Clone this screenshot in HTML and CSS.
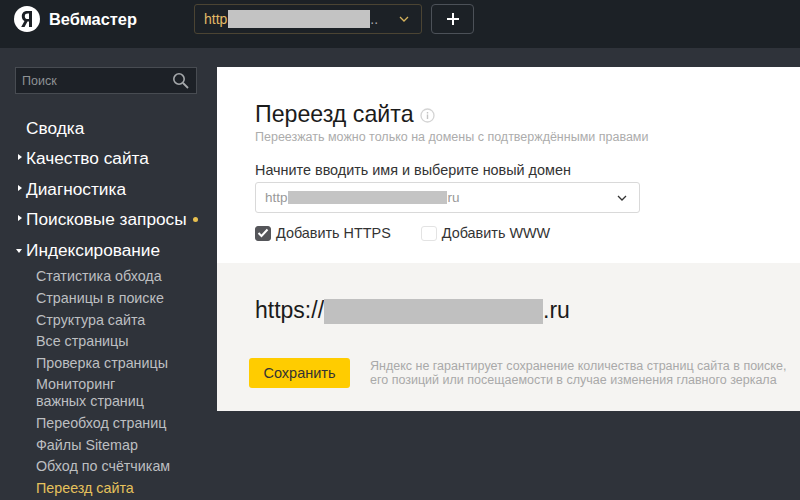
FILE: index.html
```html
<!DOCTYPE html>
<html lang="ru">
<head>
    <meta charset="UTF-8">
    <meta name="viewport" content="width=device-width, initial-scale=1.0">
    <title>Переезд сайта</title>
    <link rel="stylesheet" href="styles.css">
</head>
<body>
    <div class="header">
        <div class="logo">
            <svg class="logo-icon" width="26" height="26" viewBox="0 0 26 26">
                <circle cx="13" cy="13" r="13" fill="#fff"/>
                <path d="M15 21h3V5h-4.400C9.900 5 7.800 6.900 7.800 10.300c0 2.300 1 3.900 2.700 4.800L7.200 21h3.300l3-5.400H15zM15 13.100h-1.200c-1.800 0-3-.9-3-2.900 0-2 1.200-2.700 3-2.700H15z" fill="#1c2025" fill-rule="evenodd"/>
            </svg>
            <span class="logo-text">Вебмастер</span>
        </div>
        <div class="site-select">
            <span class="site-name">http</span>
            <span class="site-mask"></span>
            <span class="site-dots">..</span>
            <svg class="site-arrow" width="10" height="6" viewBox="0 0 10 6"><path d="M1 1l4 4 4-4" fill="none" stroke="#d6b35c" stroke-width="1.3"/></svg>
        </div>
        <div class="add-btn">
            <svg width="14" height="14" viewBox="0 0 14 14"><path d="M7 1v12M1 7h12" stroke="#fff" stroke-width="2"/></svg>
        </div>
    </div>

    <div class="page">
        <div class="sidebar">
            <div class="search">
                <span>Поиск</span>
                <svg width="17" height="17" viewBox="0 0 17 17"><circle cx="7" cy="7" r="5.2" fill="none" stroke="#a5a8ab" stroke-width="1.6"/><path d="M11 11l5 5" stroke="#a5a8ab" stroke-width="1.8"/></svg>
            </div>
            <div class="menu">
                <a class="menu-item">Сводка</a>
                <a class="menu-item closed">Качество сайта</a>
                <a class="menu-item closed">Диагностика</a>
                <a class="menu-item closed">Поисковые запросы<i class="dot"></i></a>
                <a class="menu-item opened">Индексирование</a>
                <div class="submenu">
                    <a>Статистика обхода</a>
                    <a>Страницы в поиске</a>
                    <a>Структура сайта</a>
                    <a>Все страницы</a>
                    <a>Проверка страницы</a>
                    <a class="two-lines">Мониторинг<br>важных страниц</a>
                    <a>Переобход страниц</a>
                    <a>Файлы Sitemap</a>
                    <a>Обход по счётчикам</a>
                    <a class="active">Переезд сайта</a>
                </div>
            </div>
        </div>

        <div class="content">
            <div class="form-part">
                <h1>Переезд сайта
                    <svg class="info" width="15" height="15" viewBox="0 0 15 15"><circle cx="7.5" cy="7.5" r="6.5" fill="none" stroke="#d4d4d4" stroke-width="1.3"/><path d="M7.5 6.5v4.5M7.500 4v1.500" stroke="#c4c4c4" stroke-width="1.4"/></svg>
                </h1>
                <p class="hint">Переезжать можно только на домены с подтверждёнными правами</p>
                <label class="field-label">Начните вводить имя и выберите новый домен</label>
                <div class="domain-select">
                    <span>http</span><span class="domain-mask"></span><span>ru</span>
                    <svg class="domain-arrow" width="10" height="6" viewBox="0 0 10 6"><path d="M1 1l4 4 4-4" fill="none" stroke="#333" stroke-width="1.3"/></svg>
                </div>
                <div class="checks">
                    <div class="check">
                        <span class="box checked">
                            <svg width="12" height="10" viewBox="0 0 12 10"><path d="M1.5 5l3 3 6-6.5" fill="none" stroke="#fff" stroke-width="2"/></svg>
                        </span>
                        Добавить HTTPS
                    </div>
                    <div class="check">
                        <span class="box"></span>
                        Добавить WWW
                    </div>
                </div>
            </div>
            <div class="result-part">
                <div class="result-url">https://<span class="url-mask"></span>.ru</div>
                <div class="save-row">
                    <button class="save-btn">Сохранить</button>
                    <p class="warning">Яндекс не гарантирует сохранение количества страниц сайта в поиске,<br>его позиций или посещаемости в случае изменения главного зеркала</p>
                </div>
            </div>
        </div>
    </div>
</body>
</html>
```

FILE: styles.css
```css
html, body {
    height: 100%;
}
body {
    margin: 0;
    background: #2f333a;
    font-family: "Liberation Sans", Arial, sans-serif;
    overflow: hidden;
}
.header {
    height: 48px;
    background: #1c2126;
    display: flex;
    align-items: flex-start;
    padding: 4px 0 0 14px;
    box-sizing: border-box;
}
.logo {
    display: flex;
    align-items: center;
    width: 180px;
    margin-top: 2px;
}
.logo-text {
    color: #fff;
    font-size: 16.4px;
    font-weight: bold;
    margin-left: 9px;
}
.site-select {
    width: 228px;
    height: 30px;
    border: 1px solid #4b4433;
    border-radius: 3px;
    display: flex;
    align-items: center;
    padding-left: 9px;
    box-sizing: border-box;
}
.site-name {
    color: #e2bb66;
    font-size: 14px;
}
.site-mask {
    width: 142px;
    height: 18px;
    background: #c3c3c3;
    margin-left: 1px;
}
.site-dots {
    color: #aaa;
    font-size: 14px;
}
.site-arrow {
    margin-left: 21px;
}
.add-btn {
    width: 43px;
    height: 30px;
    margin-left: 9px;
    border: 1px solid #4c5158;
    border-radius: 4px;
    display: flex;
    align-items: center;
    justify-content: center;
    box-sizing: border-box;
}
.page {
    display: flex;
    align-items: flex-start;
    padding: 19px 0 0 15px;
}
.sidebar {
    width: 182px;
    margin-right: 20px;
    flex-shrink: 0;
}
.search {
    height: 27px;
    background: #1d2127;
    border: 1px solid #484c52;
    box-sizing: border-box;
    display: flex;
    align-items: center;
    justify-content: space-between;
    padding: 0 7px 0 6px;
    color: #8e9195;
    font-size: 12.5px;
}
.menu {
    margin-top: 19.1px;
}
.menu-item {
    display: block;
    position: relative;
    height: 30.4px;
    line-height: 30px;
    padding-left: 11px;
    color: #fff;
    font-size: 17.25px;
    white-space: nowrap;
}
.closed::before {
    content: "";
    position: absolute;
    left: 3px;
    top: 11px;
    border-left: 4px solid #fff;
    border-top: 3.5px solid transparent;
    border-bottom: 3.5px solid transparent;
}
.opened::before {
    content: "";
    position: absolute;
    left: 1px;
    top: 14px;
    border-top: 4px solid #fff;
    border-left: 3.5px solid transparent;
    border-right: 3.5px solid transparent;
}
.dot {
    position: absolute;
    left: 178px;
    top: 13px;
    width: 5px;
    height: 5px;
    border-radius: 50%;
    background: #e8c04f;
}
.submenu {
    padding-left: 21px;
    padding-top: 1.3px;
}
.submenu a {
    display: block;
    color: #bdbfc1;
    font-size: 14.3px;
    line-height: 21.7px;
    white-space: nowrap;
}
.submenu .two-lines {
    line-height: 17.5px;
    padding: 1px 0 2px;
}
.submenu .active {
    color: #e6c25c;
}
.content {
    flex: 1;
}
.form-part {
    height: 196px;
    background: #fff;
    padding: 35px 0 0 38px;
    box-sizing: border-box;
}
h1 {
    margin: 0;
    color: #1b1b1b;
    font-size: 23.2px;
    font-weight: normal;
    line-height: 24px;
}
.info {
    vertical-align: -1px;
}
.hint {
    margin: 4px 0 0;
    color: #acacac;
    font-size: 12.5px;
    line-height: 15px;
}
.field-label {
    display: block;
    margin-top: 17px;
    color: #333;
    font-size: 14.4px;
    line-height: 16px;
}
.domain-select {
    width: 385px;
    height: 31px;
    margin-top: 4px;
    border: 1px solid #d9d9d9;
    border-radius: 3px;
    box-sizing: border-box;
    display: flex;
    align-items: center;
    padding-left: 9px;
    color: #999;
    font-size: 13.5px;
}
.domain-mask {
    width: 159px;
    height: 13px;
    background: #c4c4c4;
    margin-right: 1px;
}
.domain-arrow {
    margin-left: auto;
    margin-right: 12px;
}
.checks {
    display: flex;
    margin-top: 12px;
    gap: 30px;
}
.check {
    display: flex;
    align-items: center;
    color: #333;
    font-size: 14.4px;
    line-height: 16px;
}
.box {
    width: 16px;
    height: 15px;
    margin-right: 5px;
    border: 1px solid #e3e3e3;
    border-radius: 3px;
    box-sizing: border-box;
    display: flex;
    align-items: center;
    justify-content: center;
}
.box.checked {
    background: #55565a;
    border-color: #55565a;
}
.result-part {
    height: 148px;
    background: #f5f4f2;
    padding: 35px 0 0 32px;
    box-sizing: border-box;
}
.result-url {
    display: flex;
    align-items: center;
    height: 24px;
    padding-left: 6px;
    color: #1b1b1b;
    font-size: 23px;
}
.url-mask {
    width: 219px;
    height: 25px;
    margin-top: 2px;
    background: #c0c0c0;
}
.save-row {
    display: flex;
    align-items: center;
    margin-top: 36px;
}
.save-btn {
    width: 101px;
    height: 30px;
    background: #fc0;
    border: none;
    border-radius: 3px;
    color: #333;
    font-family: inherit;
    font-size: 14.5px;
    padding: 0;
}
.warning {
    margin: 0 0 0 20px;
    color: #a9a9a9;
    font-size: 12.5px;
    line-height: 14px;
    white-space: nowrap;
}
```
